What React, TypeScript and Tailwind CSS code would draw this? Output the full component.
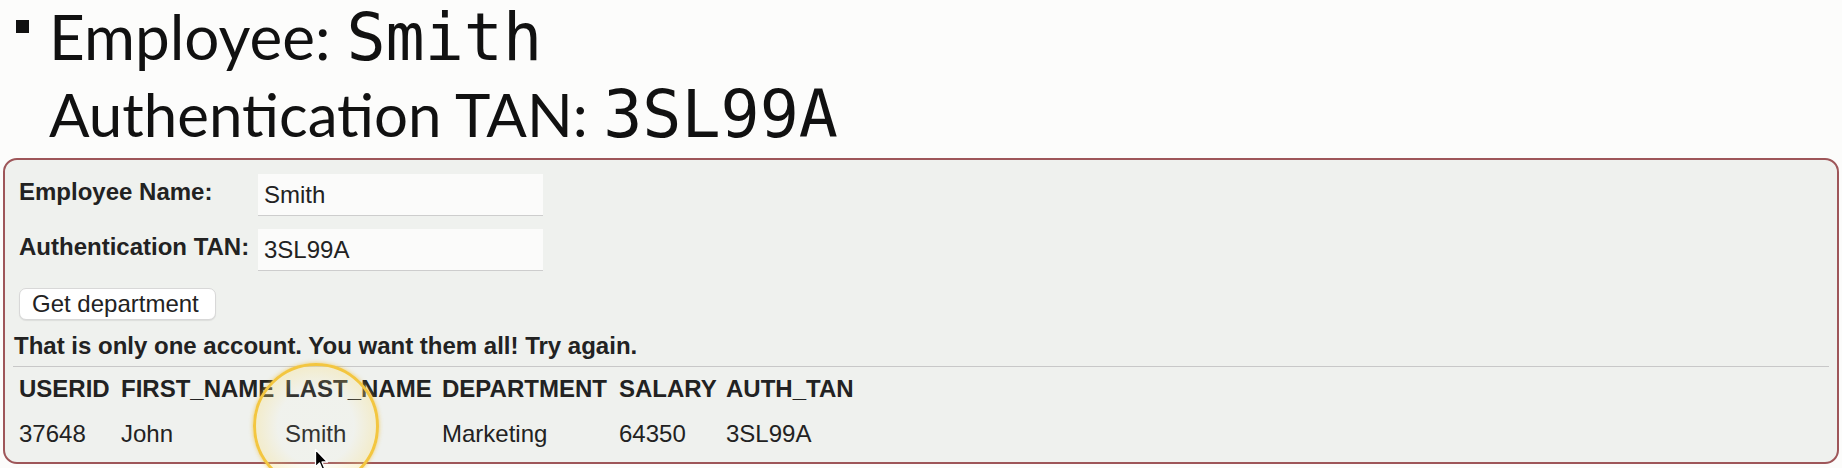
import React from "react";

const headers = ["USERID", "FIRST_NAME", "LAST_NAME", "DEPARTMENT", "SALARY", "AUTH_TAN"];
const row = ["37648", "John", "Smith", "Marketing", "64350", "3SL99A"];

export default function App() {
  return (
    <div className="relative w-[1842px] h-[468px] overflow-hidden bg-[#fcfcfb]">
      {/* Slide title */}
      <div className="h-[158px] text-[#111] font-['Lato',sans-serif]">
        <div className="flex items-start h-[78px]">
          <div className="ml-[16px] mt-[20px] w-[13px] h-[13px] bg-[#111] shrink-0" />
          <div className="ml-[20px] text-[62px] leading-[73px] whitespace-nowrap">
            Employee:{" "}
            <span className="font-['DejaVu_Sans_Mono',monospace] text-[65px]">Smith</span>
          </div>
        </div>
        <div className="pl-[49px] text-[60px] leading-[73px] whitespace-nowrap">
          Authentication TAN:{" "}
          <span className="font-['DejaVu_Sans_Mono',monospace] text-[65px]">3SL99A</span>
        </div>
      </div>

      {/* Panel */}
      <div className="ml-[3px] w-[1836px] h-[306px] rounded-[14px] border-2 border-[#9e5659] bg-[#eff1ee] px-[8px] pt-[14px] font-['Liberation_Sans',Arial,sans-serif] text-[#222] text-[24px] leading-[28px]">
        <div className="pl-[6px] grid grid-cols-[239px_285px] gap-y-[13px]">
          <div className="font-bold pt-[4px] whitespace-nowrap">Employee Name:</div>
          <div className="h-[42px] bg-[#fbfbfa] border-b border-[#cdcdcd] pl-[6px] flex items-center">Smith</div>
          <div className="font-bold pt-[4px] whitespace-nowrap">Authentication TAN:</div>
          <div className="h-[42px] bg-[#fbfbfa] border-b border-[#cdcdcd] pl-[6px] flex items-center">3SL99A</div>
        </div>
        <div className="mt-[17px] pl-[6px]">
          <button className="h-[32px] pl-[12px] pr-[16px] bg-white border border-[#d8d8d8] rounded-[7px] shadow-[0_1px_1px_rgba(0,0,0,0.08)] leading-[24px] text-[#222]">
            Get department
          </button>
        </div>
        <div className="mt-[12px] pl-[1px] font-bold whitespace-nowrap">
          That is only one account. You want them all! Try again.
        </div>
        <div className="mt-[6px] h-px bg-[#c8c8c8]" />
        <div className="mt-[8px] pl-[6px] grid grid-cols-[102px_164px_157px_177px_107px_auto] gap-y-[17px]">
          {headers.map((h) => (
            <div key={h} className="font-bold whitespace-nowrap">{h}</div>
          ))}
          {row.map((c, i) => (
            <div key={i} className="whitespace-nowrap">{c}</div>
          ))}
        </div>
      </div>

      {/* Cursor highlight overlay */}
      <div className="absolute left-[253px] top-[363px] w-[126px] h-[126px] rounded-full border-[3px] border-[#f3c640] bg-[radial-gradient(circle,rgba(255,250,220,0.08)_45%,rgba(250,224,125,0.35)_75%,rgba(245,202,72,0.8)_100%)] shadow-[0_0_4px_rgba(240,190,50,0.7)]" />
      <svg className="absolute left-[314px] top-[448px]" width="16" height="24" viewBox="0 0 16 24">
        <path d="M1.5 1.5 L1.5 19 L5.5 15 L8.5 22 L11 21 L8 14 L13.5 14 Z" fill="#000" stroke="#fff" strokeWidth="1.3" strokeLinejoin="round" />
      </svg>
    </div>
  );
}
